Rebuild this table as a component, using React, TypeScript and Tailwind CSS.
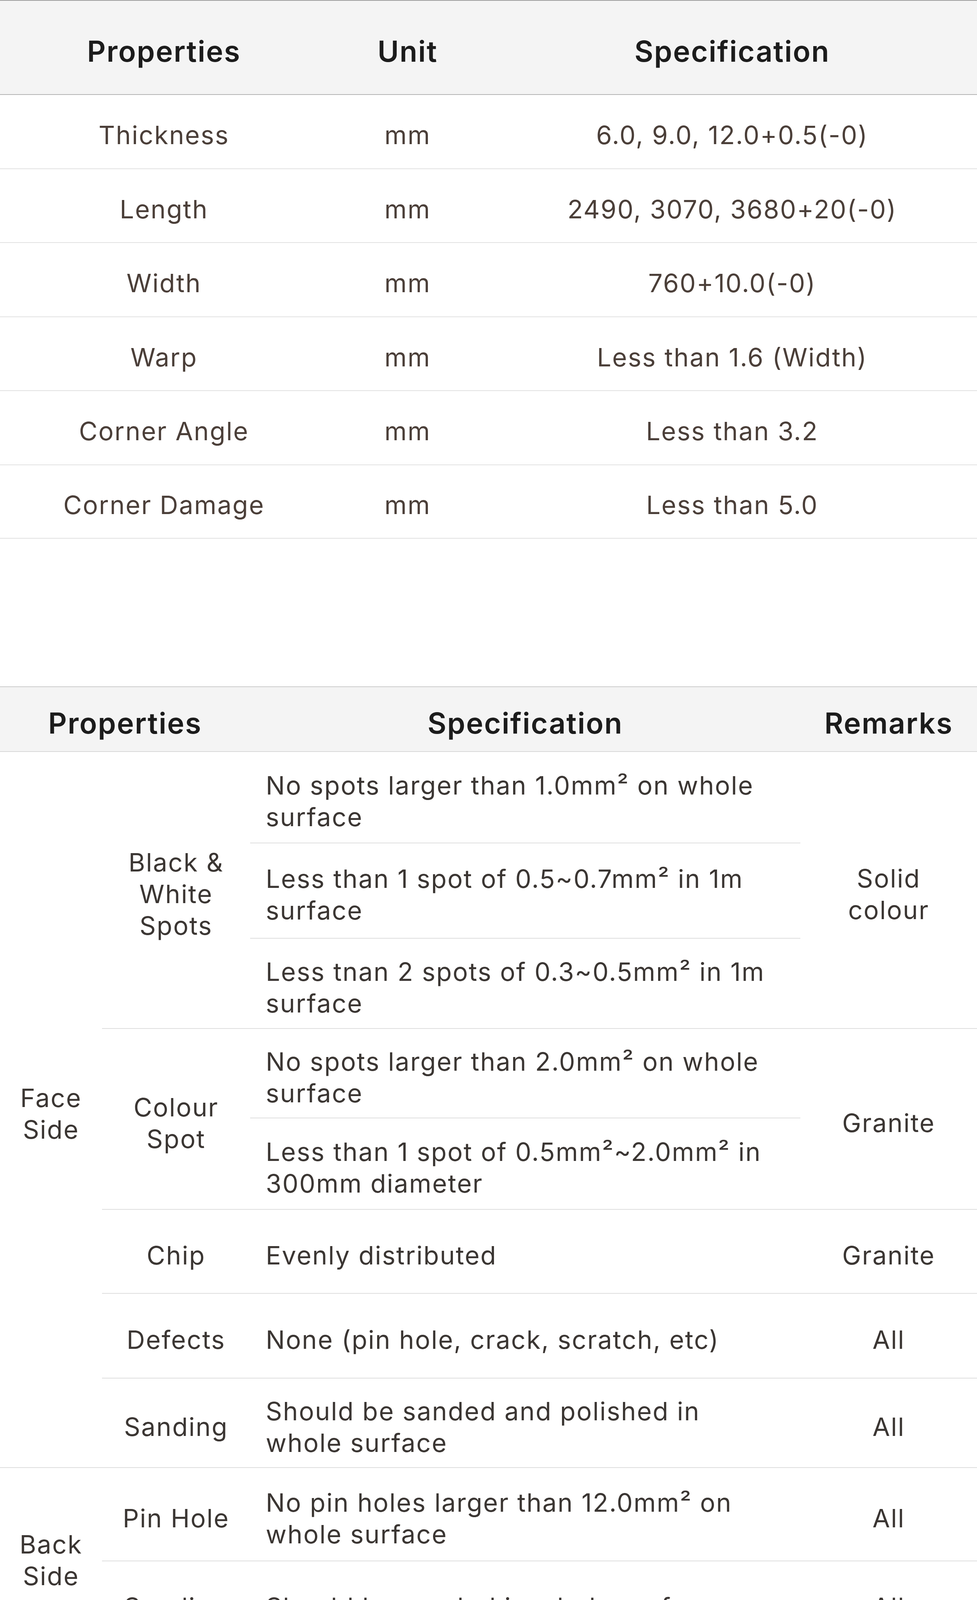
import React from "react";

const font = { fontFamily: "Inter, 'Noto Sans', sans-serif" };

type SizeRow = { prop: string; unit: string; spec: string; h: string };

const sizeRows: SizeRow[] = [
  { prop: "Thickness", unit: "mm", spec: "6.0, 9.0, 12.0+0.5(-0)", h: "h-[190px]" },
  { prop: "Length", unit: "mm", spec: "2490, 3070, 3680+20(-0)", h: "h-[189px]" },
  { prop: "Width", unit: "mm", spec: "760+10.0(-0)", h: "h-[190px]" },
  { prop: "Warp", unit: "mm", spec: "Less than 1.6 (Width)", h: "h-[189px]" },
  { prop: "Corner Angle", unit: "mm", spec: "Less than 3.2", h: "h-[190px]" },
  { prop: "Corner Damage", unit: "mm", spec: "Less than 5.0", h: "h-[188px]" },
];

const th1 = "border-t-2 border-b-2 border-t-[#9e9e9e] border-b-[#b4b4b4] pt-[20px] font-semibold";
const td1 = "border-b-2 border-[#e2e2e2] pt-[18px] text-center";

function SizeTable() {
  return (
    <table className="w-full table-fixed border-separate border-spacing-0">
      <colgroup>
        <col className="w-[839px]" />
        <col className="w-[408px]" />
        <col />
      </colgroup>
      <thead>
        <tr className="h-[243px] bg-[#f4f4f4] text-[74px] tracking-[0.03em] text-[#1c1c1c]">
          <th className={th1}>Properties</th>
          <th className={th1}>Unit</th>
          <th className={th1}>Specification</th>
        </tr>
      </thead>
      <tbody className="text-[65px] tracking-[0.035em] text-[#4b3f39]">
        {sizeRows.map((r) => (
          <tr key={r.prop} className={r.h}>
            <td className={td1}>{r.prop}</td>
            <td className={td1}>{r.unit}</td>
            <td className={td1}>{r.spec}</td>
          </tr>
        ))}
      </tbody>
    </table>
  );
}

const th2 = "border-t-2 border-b-2 border-t-[#cccccc] border-b-[#d8d8d8] pt-[20px] font-semibold";
const cell = "border-b-2 border-[#dedede] pt-[20px]";
const mid = `${cell} text-center`;
const spec = `${cell} pl-[40px] pr-[20px] text-left`;

function QualityTable() {
  return (
    <table className="mt-[378px] w-full table-fixed border-separate border-spacing-0 text-[65px] leading-[81px] tracking-[0.035em] text-[#3b3633]">
      <colgroup>
        <col className="w-[261px]" />
        <col className="w-[379px]" />
        <col className="w-[1408px]" />
        <col />
      </colgroup>
      <thead>
        <tr className="h-[168px] bg-[#f4f4f4] text-[74px] tracking-[0.03em] text-[#1c1c1c]">
          <th colSpan={2} className={th2}>Properties</th>
          <th className={th2}>Specification</th>
          <th className={th2}>Remarks</th>
        </tr>
      </thead>
      <tbody>
        <tr className="h-[234px]">
          <td rowSpan={8} className={mid}>Face<br />Side</td>
          <td rowSpan={3} className={mid}>Black &amp;<br />White<br />Spots</td>
          <td className={spec}>No spots larger than 1.0mm² on whole<br />surface</td>
          <td rowSpan={3} className={mid}>Solid<br />colour</td>
        </tr>
        <tr className="h-[244px]">
          <td className={spec}>Less than 1 spot of 0.5~0.7mm² in 1m<br />surface</td>
        </tr>
        <tr className="h-[231px]">
          <td className={spec}>Less tnan 2 spots of 0.3~0.5mm² in 1m<br />surface</td>
        </tr>
        <tr className="h-[229px]">
          <td rowSpan={2} className={mid}>Colour<br />Spot</td>
          <td className={spec}>No spots larger than 2.0mm² on whole<br />surface</td>
          <td rowSpan={2} className={mid}>Granite</td>
        </tr>
        <tr className="h-[234px]">
          <td className={spec}>Less than 1 spot of 0.5mm²~2.0mm² in<br />300mm diameter</td>
        </tr>
        <tr className="h-[215px]">
          <td className={mid}>Chip</td>
          <td className={spec}>Evenly distributed</td>
          <td className={mid}>Granite</td>
        </tr>
        <tr className="h-[217px]">
          <td className={mid}>Defects</td>
          <td className={spec}>None (pin hole, crack, scratch, etc)</td>
          <td className={mid}>All</td>
        </tr>
        <tr className="h-[229px]">
          <td className={mid}>Sanding</td>
          <td className={spec}>Should be sanded and polished in<br />whole surface</td>
          <td className={mid}>All</td>
        </tr>
        <tr className="h-[239px]">
          <td rowSpan={2} className={mid}>Back<br />Side</td>
          <td className={mid}>Pin Hole</td>
          <td className={spec}>No pin holes larger than 12.0mm² on<br />whole surface</td>
          <td className={mid}>All</td>
        </tr>
        <tr className="h-[215px]">
          <td className={mid}>Sanding</td>
          <td className={spec}>Should be sanded in whole surface</td>
          <td className={mid}>All</td>
        </tr>
      </tbody>
    </table>
  );
}

export default function App() {
  return (
    <div className="w-[2500px] bg-white" style={font}>
      <SizeTable />
      <QualityTable />
    </div>
  );
}
